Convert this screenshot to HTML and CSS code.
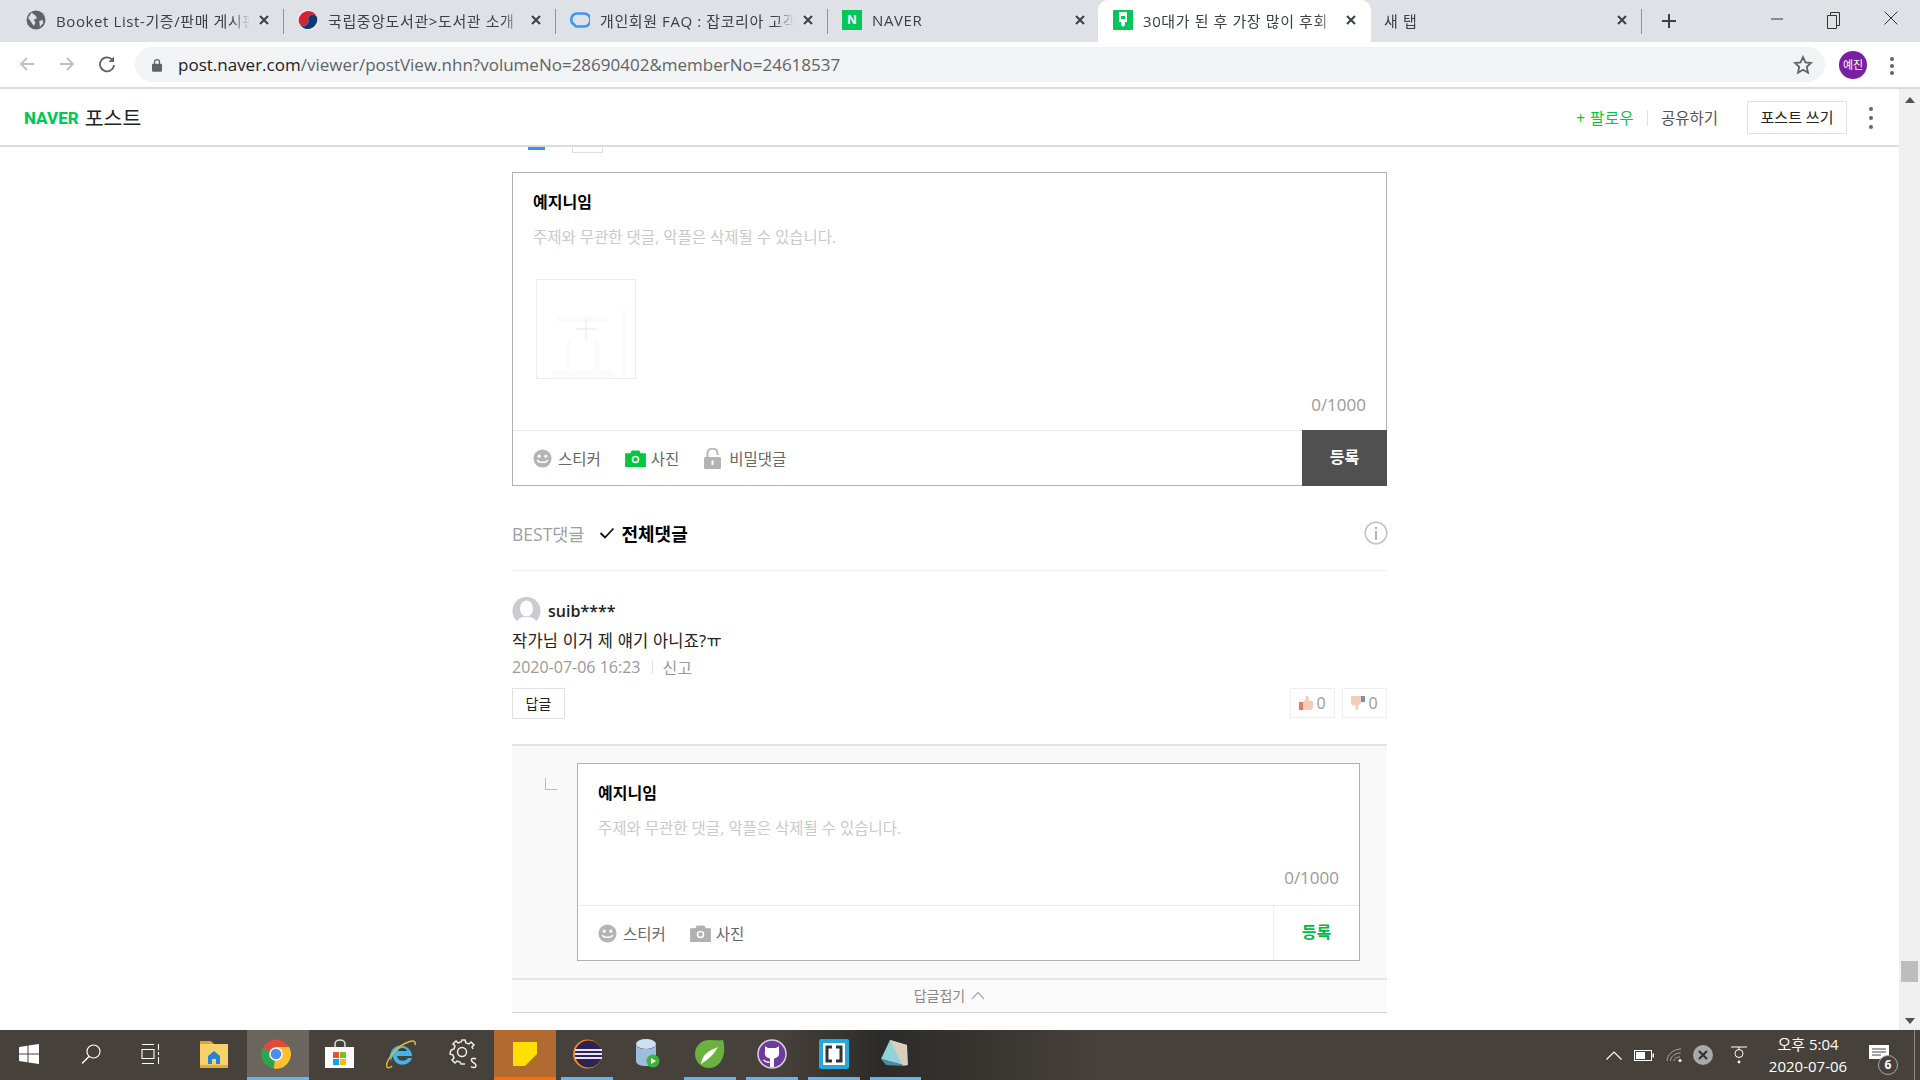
FILE: index.html
```html
<!DOCTYPE html>
<html lang="ko">
<head>
    <meta charset="UTF-8">
    <title>30대가 된 후 가장 많이 후회</title>
    <link rel="stylesheet" href="styles.css">
</head>
<body>
    <svg class="sprites" width="0" height="0">
        <symbol id="ico-smile" viewBox="0 0 20 20">
            <circle cx="10" cy="10" r="9.5" fill="#b4b4b4"/>
            <circle cx="6.5" cy="7.5" r="1.6" fill="#fff"/>
            <circle cx="13.5" cy="7.5" r="1.6" fill="#fff"/>
            <path d="M4.5 11.5c1.2 3.4 9.8 3.4 11 0" fill="none" stroke="#fff" stroke-width="1.6"/>
        </symbol>
        <symbol id="ico-camera" viewBox="0 0 22 18">
            <path d="M0 3.5h5.5l1.5-3h8l1.500 3H22V18H0z" fill="currentColor"/>
            <circle cx="11" cy="10" r="4" fill="#fff"/>
            <circle cx="11" cy="10" r="2.300" fill="currentColor"/>
        </symbol>
        <symbol id="ico-x" viewBox="0 0 12 12">
            <path d="M2 2l8 8M10 2l-8 8" stroke="#3c4043" stroke-width="2" fill="none"/>
        </symbol>
    </svg>

    <div class="tabstrip">
        <div class="tab">
            <svg class="favicon" viewBox="0 0 18 18"><circle cx="9" cy="9" r="8.500" fill="#5f6368"/><path d="M5 2.500l3 2 2 3-3 1 1.500 3-1.500 3L4 10 2 7zM12 10l3-1 .5 3-3 3z" fill="#dee1e6"/></svg>
            <span class="tab-title">Booket List-기증/판매 게시판</span>
            <svg class="tab-close"><use href="#ico-x"/></svg>
        </div>
        <div class="tab">
            <svg class="favicon" viewBox="0 0 20 20"><circle cx="10" cy="10" r="10" fill="#fff"/><path d="M1 13A9.500 9.500 0 0 1 19 7 5 5 0 0 0 10 8.500 5 5 0 0 1 1 13z" fill="#d5232f"/><path d="M1 13a5 5 0 0 0 9-4.500 5 5 0 0 1 9-1.500A9.500 9.500 0 0 1 1 13z" fill="#0e3a78"/></svg>
            <span class="tab-title">국립중앙도서관&gt;도서관 소개</span>
            <svg class="tab-close"><use href="#ico-x"/></svg>
        </div>
        <div class="tab">
            <svg class="favicon" viewBox="0 0 20 20"><path d="M6 16.500h8a6.500 6.500 0 0 0 0-13H7a6 6 0 0 0-3 11z" fill="none" stroke="#3b96f5" stroke-width="2.600"/></svg>
            <span class="tab-title">개인회원 FAQ : 잡코리아 고객</span>
            <svg class="tab-close"><use href="#ico-x"/></svg>
        </div>
        <div class="tab tab-last-before-active">
            <span class="favicon favicon-naver">N</span>
            <span class="tab-title">NAVER</span>
            <svg class="tab-close"><use href="#ico-x"/></svg>
        </div>
        <div class="tab tab-active">
            <svg class="favicon" viewBox="0 0 20 20"><rect width="20" height="20" rx="1" fill="#03c75a"/><path d="M6 2h8v10h-2v3l-2 2-2-2v-3H6z" fill="#fff"/><rect x="8" y="6" width="4" height="3" fill="#03c75a"/></svg>
            <span class="tab-title">30대가 된 후 가장 많이 후회</span>
            <svg class="tab-close"><use href="#ico-x"/></svg>
        </div>
        <div class="tab">
            <span class="tab-title tab-title-new">새 탭</span>
            <svg class="tab-close"><use href="#ico-x"/></svg>
        </div>
        <svg class="new-tab" viewBox="0 0 16 16"><path d="M8 1v14M1 8h14" stroke="#3c4043" stroke-width="2" fill="none"/></svg>
        <div class="win-buttons">
            <svg class="win-min" viewBox="0 0 14 14"><path d="M1 7h12" stroke="#333" stroke-width="1"/></svg>
            <svg class="win-restore" viewBox="0 0 14 18"><path d="M.5 4.500h9v13h-9zM3.500 4.500v-3h9v13h-3" fill="none" stroke="#333"/></svg>
            <svg class="win-close" viewBox="0 0 14 14"><path d="M.5.5l13 13M13.500.5l-13 13" stroke="#333" fill="none"/></svg>
        </div>
    </div>

    <div class="toolbar">
        <svg class="nav-icon" viewBox="0 0 18 18"><path d="M16 9H3M9 3L3 9l6 6" fill="none" stroke="#bdc1c6" stroke-width="1.800"/></svg>
        <svg class="nav-icon" viewBox="0 0 18 18"><path d="M2 9h13M9 3l6 6-6 6" fill="none" stroke="#bdc1c6" stroke-width="1.800"/></svg>
        <svg class="nav-icon" viewBox="0 0 18 18"><path d="M14.500 5A7 7 0 1 0 16 10" fill="none" stroke="#5f6368" stroke-width="1.800"/><path d="M16 1.500V7h-5.500z" fill="#5f6368"/></svg>
        <div class="omnibox">
            <svg class="lock-icon" viewBox="0 0 12 16"><path d="M3 7V4.500a3 3 0 0 1 6 0V7" fill="none" stroke="#5f6368" stroke-width="1.500"/><rect y="6.500" width="12" height="9.500" rx="1" fill="#5f6368"/></svg>
            <span class="url"><b>post.naver.com</b>/viewer/postView.nhn?volumeNo=28690402&amp;memberNo=24618537</span>
            <svg class="star-icon" viewBox="0 0 20 20"><path d="M10 2l2.400 5.400 5.600.6-4.200 3.900 1.200 5.800-5-3-5 3 1.200-5.800L2 8l5.600-.6z" fill="none" stroke="#5f6368" stroke-width="1.800"/></svg>
        </div>
        <div class="profile">예진</div>
        <div class="kebab kebab-chrome"><i></i><i></i><i></i></div>
    </div>

    <div class="viewport">
        <div class="page">
            <header class="post-header">
                <div class="brand"><span class="brand-naver">NAVER</span> <span class="brand-post">포스트</span></div>
                <div class="header-actions">
                    <span class="follow">+ 팔로우</span>
                    <span class="header-sep"></span>
                    <span class="share">공유하기</span>
                    <span class="write-btn">포스트 쓰기</span>
                    <div class="kebab kebab-post"><i></i><i></i><i></i></div>
                </div>
            </header>

            <div class="content">
                <div class="stub">
                    <span class="stub-blue"></span>
                    <span class="stub-box"></span>
                </div>

                <div class="editor">
                    <div class="editor-body">
                        <div class="editor-name">예지니임</div>
                        <div class="editor-placeholder">주제와 무관한 댓글, 악플은 삭제될 수 있습니다.</div>
                        <div class="photo-slot">
                            <svg class="photo-plus" viewBox="0 0 98 98">
                                <path d="M20 36h52v6H20zM30 60h4v45h-4zM58 60h4v45h-4zM14 90h62v8H14zM84 30h6v68h-6z" fill="#fbfbfb"/>
                                <path d="M49 39v20M39 49h20" stroke="#e6e6e6" fill="none"/>
                            </svg>
                        </div>
                        <div class="editor-count">0/1000</div>
                    </div>
                    <div class="editor-foot">
                        <div class="editor-tools">
                            <span class="tool"><svg class="tool-smile"><use href="#ico-smile"/></svg>스티커</span>
                            <span class="tool"><svg class="tool-camera green"><use href="#ico-camera"/></svg>사진</span>
                            <span class="tool tool-lock-wrap"><svg class="tool-lock" viewBox="0 0 17 21"><path d="M3.500 10V5.500a5 5 0 0 1 10 0V7" fill="none" stroke="#b4b4b4" stroke-width="2"/><rect y="9" width="17" height="12" rx="1.500" fill="#b4b4b4"/><rect x="7.500" y="12.500" width="2" height="4.500" fill="#fff"/></svg>비밀댓글</span>
                        </div>
                        <div class="submit-dark">등록</div>
                    </div>
                </div>

                <div class="sort-row">
                    <span class="sort-best">BEST댓글</span>
                    <svg class="sort-check" viewBox="0 0 16 12"><path d="M1.500 6l4.500 4.500 8.500-9" fill="none" stroke="#111" stroke-width="1.800"/></svg>
                    <span class="sort-all">전체댓글</span>
                    <svg class="info-icon" viewBox="0 0 24 24"><circle cx="12" cy="12" r="10.800" fill="none" stroke="#c4c4c4" stroke-width="1.500"/><circle cx="12" cy="7" r="1.300" fill="#b5b5b5"/><path d="M12 10v9" stroke="#b5b5b5" stroke-width="2"/></svg>
                </div>

                <div class="comment">
                    <div class="comment-user">
                        <svg class="avatar" viewBox="0 0 28 28"><circle cx="14" cy="14" r="14" fill="#c9ccd0"/><ellipse cx="14" cy="11.500" rx="6.500" ry="8" fill="#fff"/><path d="M4 25c3-5 6-5 10-5s7 0 10 5a14 14 0 0 1-20 0z" fill="#fff"/></svg>
                        <span class="user-id">suib****</span>
                    </div>
                    <p class="comment-text">작가님 이거 제 얘기 아니죠?ㅠ</p>
                    <div class="comment-meta"><span>2020-07-06 16:23</span><span class="meta-sep"></span><span>신고</span></div>
                    <div class="comment-actions">
                        <span class="reply-btn">답글</span>
                        <div class="votes">
                            <span class="vote"><svg class="thumb" viewBox="0 0 14 14"><rect y="6" width="4" height="8" fill="#dc7f66"/><path d="M4 6l3-3V0h2l1 4v1h4v7l-2 2H4z" fill="#f4cdb9"/></svg>0</span>
                            <span class="vote"><svg class="thumb" viewBox="0 0 14 14"><rect x="10" width="4" height="6" fill="#7d93ad"/><path d="M0 0h10v7l-3 3v4H5L4 9H1L0 7z" fill="#f4cdb9"/></svg>0</span>
                        </div>
                    </div>
                </div>

                <div class="replies">
                    <span class="reply-mark"></span>
                    <div class="editor editor-reply">
                        <div class="editor-body">
                            <div class="editor-name">예지니임</div>
                            <div class="editor-placeholder">주제와 무관한 댓글, 악플은 삭제될 수 있습니다.</div>
                            <div class="editor-count">0/1000</div>
                        </div>
                        <div class="editor-foot">
                            <div class="editor-tools">
                                <span class="tool"><svg class="tool-smile"><use href="#ico-smile"/></svg>스티커</span>
                                <span class="tool"><svg class="tool-camera gray"><use href="#ico-camera"/></svg>사진</span>
                            </div>
                            <div class="submit-green">등록</div>
                        </div>
                    </div>
                </div>
                <div class="fold">답글접기 <svg class="fold-arrow" viewBox="0 0 14 9"><path d="M1 8l6-6.500L13 8" fill="none" stroke="#aaa" stroke-width="1.200"/></svg></div>
            </div>
        </div>
        <div class="scrollbar">
            <span class="arrow-up"></span>
            <span class="scroll-thumb"></span>
            <span class="arrow-down"></span>
        </div>
    </div>

    <footer class="taskbar">
        <div class="task-apps">
            <div class="slot slot-shift"><svg class="ti-win" viewBox="0 0 20 20"><path d="M0 3l8.500-1.200v7.700H0zM9.500 1.600L20 0v9.500H9.500zM0 10.500h8.500v7.700L0 17zM9.500 10.500H20V20l-10.500-1.600z" fill="#fff"/></svg></div>
            <div class="slot slot-shift"><svg class="ti-search" viewBox="0 0 20 20"><circle cx="12.500" cy="7.500" r="6.500" fill="none" stroke="#fff" stroke-width="1.200"/><path d="M8 12.500L1 19.500" stroke="#fff" stroke-width="1.400"/></svg></div>
            <div class="slot slot-shift-more"><svg class="ti-view" viewBox="0 0 20 20"><path d="M1 .5h12M1 19.500h12M1 5.500h12v9H1zM17.500 0v6M17.500 8v3M17.500 13v7" fill="none" stroke="#fff" stroke-width="1.100"/></svg></div>
            <div class="slot slot-shift"><svg class="ti-folder" viewBox="0 0 28 28"><path d="M0 1h11l3 3H0z" fill="#e2a427"/><rect y="4" width="28" height="24" fill="#f7d26a"/><rect y="25" width="28" height="3" fill="#e0ae3a"/><path d="M8 24v-8l6-5 6 5v8h-4v-5h-4v5z" fill="#2a82d4"/></svg></div>
            <div class="slot slot-on"><svg class="ti-app" viewBox="0 0 30 30"><circle cx="15" cy="15" r="14.500" fill="#e2483b"/><path d="M15 15L1.600 9A14.500 14.500 0 0 0 13 29.400z" fill="#2ea44f"/><path d="M15 8h13a14.500 14.500 0 0 1-15 21.400z" fill="#fbc02d"/><circle cx="15" cy="15" r="6.800" fill="#fff"/><circle cx="15" cy="15" r="5.300" fill="#4b8df3"/></svg></div>
            <div class="slot"><svg class="ti-store" viewBox="0 0 30 30"><path d="M10 8V5a5 4 0 0 1 10 0v3" fill="none" stroke="#ddd" stroke-width="1.500"/><rect y="8" width="29" height="21" fill="#fff"/><rect x="8" y="13" width="6" height="6" fill="#e8532b"/><rect x="15" y="13" width="6" height="6" fill="#7fba2c"/><rect x="8" y="20" width="6" height="6" fill="#05a6f0"/><rect x="15" y="20" width="6" height="6" fill="#f9ba0a"/></svg></div>
            <div class="slot"><svg class="ti-app" viewBox="0 0 30 30"><path d="M5 22a11 11 0 1 1 21-5H11c1 6 9 6 11 2h4c-3 9-17 9-19-1-.5-1 0-2-2 4z" fill="#3fb7ea"/><path d="M12 12h9c-1-4-8-4-9 0z" fill="#3d3a35"/><path d="M1 28C-1 24 8 9 20 4c6-3 10-3 9 2M1 28c1 1 3 1 5-1" fill="none" stroke="#e9b92d" stroke-width="1.500"/></svg></div>
            <div class="slot"><svg class="ti-app" viewBox="0 0 30 30"><circle cx="14" cy="13" r="4.500" fill="none" stroke="#eee" stroke-width="1.500"/><path d="M3 11l3-1 1-3-2-2 3-3 2 2 3-1 1-2h3l1 3 3 1 2-2 3 3-2 2 1 2M3 11l-1 4 3 1 1 3-2 2 3 3 2-2 3 1 1 2h4" fill="none" stroke="#eee" stroke-width="1.500"/><path d="M28 20c-2-1-5-1-4.500 1.500S28 24 28 26.500s-3 2.500-5 1" fill="none" stroke="#eee" stroke-width="1.500"/></svg></div>
            <div class="slot slot-sticky"><svg class="ti-sticky" viewBox="0 0 24 24"><rect width="24" height="24" fill="#ffe000"/><path d="M24 12L12 24h12z" fill="#a8712a"/></svg></div>
            <div class="slot slot-run-small"><svg class="ti-app" viewBox="0 0 30 30"><circle cx="15.500" cy="15" r="14.500" fill="#f08c1a"/><circle cx="16.500" cy="15" r="13.500" fill="#2c2255"/><path d="M3 11h27M3 15h27M3 19h27" stroke="#e8e4f5" stroke-width="2"/></svg></div>
            <div class="slot"><svg class="ti-db" viewBox="0 0 24 30"><ellipse cx="10" cy="5" rx="10" ry="5" fill="#cfe0f2"/><path d="M0 5v17c0 3 4 5 10 5s10-2 10-5V5c0 3-4 5-10 5S0 8 0 5z" fill="#9dbcde"/><circle cx="17" cy="22" r="6.500" fill="#3fb23c"/><path d="M15 19l5 3-5 3z" fill="#fff"/></svg></div>
            <div class="slot"><svg class="ti-app" viewBox="0 0 30 30"><path d="M28 1c4 14-2 28-14 28A14 14 0 0 1 14 1c6 0 11 1 14 0z" fill="#6ab23d"/><path d="M6 25C8 14 14 12 23 8 19 15 14 20 6 25zM6 25l3 2" fill="#fff"/></svg></div>
            <div class="slot"><svg class="ti-app" viewBox="0 0 30 30"><circle cx="15" cy="15" r="14" fill="#6f3a9c" stroke="#d9d2df" stroke-width="1.500"/><path d="M8 7l3 2h8l3-2v5c1 5-2 7-5 7.500V28h-4v-8.500C10 19 7 17 8 12z" fill="#fff"/><path d="M12.500 23c-3 1-4-1-6-2" fill="none" stroke="#fff" stroke-width="1.500"/></svg></div>
            <div class="slot"><svg class="ti-app" viewBox="0 0 30 30"><rect width="30" height="30" rx="2" fill="#25a7e0"/><rect x="4" y="4" width="22" height="22" fill="#fff"/><path d="M13 8H8v14h5M17 8h5v14h-5" fill="none" stroke="#333" stroke-width="3"/></svg></div>
            <div class="slot"><svg class="ti-app" viewBox="0 0 30 30"><path d="M10 1l17 5-4 20L1 20z" fill="#8fd3d9"/><path d="M10 1l17 5 1 20-5 1z" fill="#d8d0bc"/><path d="M1 20l22 6 3 1-20-1z" fill="#4a8f9c"/></svg></div>
        </div>
        <div class="tray">
            <svg class="tray-chev" viewBox="0 0 16 9"><path d="M.5 8.500L8 1l7.500 7.500" fill="none" stroke="#fff" stroke-width="1.200"/></svg>
            <svg class="tray-batt" viewBox="0 0 20 11"><rect x=".5" y=".5" width="17" height="10" fill="none" stroke="#fff"/><rect x="2" y="2" width="9" height="7" fill="#fff"/><rect x="18.500" y="3.500" width="1.500" height="4" fill="#fff"/></svg>
            <svg class="tray-wifi" viewBox="0 0 16 14"><path d="M1 13C1 7 7 1 15 1M4.500 13c0-4 4-8 10-8M8 13c0-2 2-4 6-4" fill="none" stroke="#aaa" stroke-width="1"/><circle cx="14" cy="12.500" r="1.500" fill="#fff"/></svg>
            <svg class="tray-x" viewBox="0 0 20 20"><circle cx="10" cy="10" r="10" fill="#a9a9a9"/><path d="M6 6l8 8M14 6l-8 8" stroke="#333" stroke-width="2.200"/></svg>
            <svg class="tray-bulb" viewBox="0 0 16 18"><path d="M0 1h16" stroke="#fff"/><circle cx="8" cy="7.500" r="4" fill="none" stroke="#fff"/><path d="M8 3.500V1" stroke="#fff"/><circle cx="8" cy="16" r="1.400" fill="#fff"/></svg>
            <div class="clock"><div>오후 5:04</div><div>2020-07-06</div></div>
            <div class="notify">
                <svg class="notify-icon" viewBox="0 0 20 18"><path d="M0 0h20v14H0z" fill="#fff"/><path d="M3 4h14M3 7h14M3 10h9" stroke="#444" stroke-width="1"/></svg>
                <span class="notify-badge">6</span>
            </div>
            <span class="show-desktop"></span>
        </div>
    </footer>
</body>
</html>
```

FILE: styles.css
```css
* {
    box-sizing: border-box;
}

html, body {
    margin: 0;
    padding: 0;
}

body {
    width: 1920px;
    height: 1080px;
    overflow: hidden;
    display: flex;
    flex-direction: column;
    background-color: #fff;
    color: #333;
    font-family: "Open Sans", "Noto Sans CJK KR", sans-serif;
    font-size: 15px;
}

.sprites {
    position: absolute;
}

/* chrome tabs */
.tabstrip {
    height: 42px;
    flex: none;
    display: flex;
    align-items: stretch;
    padding-left: 12px;
    background-color: #dee1e6;
    font-size: 15px;
    letter-spacing: .6px;
    color: #3c4043;
}

.tab {
    width: 272px;
    display: flex;
    align-items: center;
    padding: 0 14px 2px 14px;
    position: relative;
}

.tab::after {
    content: "";
    position: absolute;
    right: 0;
    top: 9px;
    height: 25px;
    width: 1px;
    background-color: #8f9296;
}

.tab-last-before-active::after {
    background-color: transparent;
}

.tab-active {
    background-color: #fff;
    border-radius: 10px 10px 0 0;
    margin-left: -2px;
    margin-right: -1px;
    padding-left: 15px;
    width: 273px;
}

.tab-active::after {
    display: none;
}

.favicon {
    width: 20px;
    height: 20px;
    flex: none;
    margin-right: 10px;
}

.favicon-naver {
    background-color: #03c75a;
    color: #fff;
    font: bold 13px/20px "Liberation Sans", sans-serif;
    letter-spacing: 0;
    text-align: center;
}

.tab-title {
    flex: 1;
    min-width: 0;
    white-space: nowrap;
    overflow: hidden;
    -webkit-mask-image: linear-gradient(to right, #000 90%, transparent);
    mask-image: linear-gradient(to right, #000 90%, transparent);
}

.tab-close {
    width: 12px;
    height: 12px;
    flex: none;
    margin-left: 8px;
}

.new-tab {
    width: 16px;
    height: 16px;
    margin: 13px 0 0 19px;
}

.win-buttons {
    margin-left: auto;
    display: flex;
    align-items: flex-start;
}

.win-min {
    width: 14px;
    height: 14px;
    margin: 12px 43px 0 0;
}

.win-restore {
    width: 14px;
    height: 18px;
    margin: 11px 43px 0 0;
}

.win-close {
    width: 14px;
    height: 14px;
    margin: 11px 22px 0 0;
}

/* chrome toolbar */
.toolbar {
    height: 47px;
    flex: none;
    display: flex;
    align-items: flex-start;
    padding: 5px 19px 0 18px;
    background-color: #fff;
    border-bottom: 2px solid #dadada;
}

.nav-icon {
    width: 18px;
    height: 18px;
    margin: 8px 22px 0 0;
}

.nav-icon:nth-child(3) {
    margin-right: 19px;
}

.omnibox {
    width: 1690px;
    height: 35px;
    flex: none;
    display: flex;
    align-items: center;
    padding: 0 12px 0 17px;
    background-color: #f1f3f4;
    border-radius: 18px;
}

.lock-icon {
    width: 10px;
    height: 14px;
    margin-right: 16px;
}

.url {
    font-size: 17px;
    color: #5f6368;
    white-space: nowrap;
}

.url b {
    font-weight: 400;
    color: #202124;
}

.star-icon {
    width: 20px;
    height: 20px;
    margin-left: auto;
}

.profile {
    width: 28px;
    height: 28px;
    margin: 4px 0 0 14px;
    border-radius: 50%;
    background-color: #7b1fa2;
    color: #fff;
    font-size: 11px;
    line-height: 28px;
    text-align: center;
}

.kebab {
    display: flex;
    flex-direction: column;
    align-items: center;
}

.kebab i {
    display: block;
    border-radius: 50%;
}

.kebab-chrome {
    gap: 3px;
    margin: 10px 0 0 23px;
}

.kebab-chrome i {
    width: 4px;
    height: 4px;
    background-color: #5f6368;
}

/* page */
.viewport {
    flex: 1;
    min-height: 0;
    display: flex;
}

.page {
    flex: 1;
    min-width: 0;
    background-color: #fff;
}

.post-header {
    height: 58px;
    display: flex;
    align-items: center;
    justify-content: space-between;
    padding: 1px 26px 0 24px;
    border-bottom: 2px solid #dcdcdc;
}

.brand {
    display: flex;
    align-items: center;
    gap: 6px;
}

.brand-naver {
    color: #03c75a;
    font: 800 17px/20px "Roboto", sans-serif;
}

.brand-post {
    color: #222;
    font-size: 20.500px;
    line-height: 24px;
}

.header-actions {
    display: flex;
    align-items: center;
}

.follow {
    color: #00c73c;
    font-size: 15.500px;
    letter-spacing: .4px;
}

.header-sep {
    width: 1px;
    height: 16px;
    margin: 0 13px 0 13px;
    background-color: #e2e2e2;
}

.share {
    color: #555;
    font-size: 15.500px;
}

.write-btn {
    width: 100px;
    height: 33px;
    margin-left: 29px;
    border: 1px solid #e2e2e2;
    color: #222;
    font-size: 15px;
    line-height: 30px;
    text-align: center;
}

.kebab-post {
    gap: 5px;
    margin-left: 22px;
}

.kebab-post i {
    width: 4px;
    height: 4px;
    background-color: #666;
}

.content {
    width: 875px;
    margin-left: 512px;
}

.stub {
    height: 5px;
    display: flex;
    align-items: flex-start;
}

.stub-blue {
    width: 17px;
    height: 3px;
    margin-left: 16px;
    background-color: #3a8df2;
}

.stub-box {
    width: 31px;
    height: 6px;
    margin-left: 27px;
    border: 1px solid #ddd;
    border-top: none;
}

/* comment editor */
.editor {
    margin-top: 20px;
    border: 1px solid #b0b0b0;
    background-color: #fff;
}

.editor-body {
    padding: 18px 20px 15px 20px;
    height: 257px;
}

.editor-name {
    height: 22px;
    color: #000;
    font-size: 16px;
    font-weight: 700;
    line-height: 22px;
}

.editor-placeholder {
    height: 22px;
    margin-top: 13px;
    color: #c9c9c9;
    font-size: 15.500px;
    line-height: 22px;
}

.photo-slot {
    width: 100px;
    height: 100px;
    margin: 31px 0 0 3px;
    border: 1px solid #ececec;
    overflow: hidden;
}

.photo-plus {
    display: block;
    width: 98px;
    height: 98px;
}

.editor-count {
    height: 20px;
    margin-top: 16px;
    color: #999;
    font-size: 17px;
    line-height: 20px;
    text-align: right;
}

.editor-foot {
    height: 55px;
    display: flex;
    border-top: 1px solid #eaeaea;
}

.editor-tools {
    flex: 1;
    display: flex;
    align-items: center;
    gap: 24px;
    padding: 0 0 0 20px;
}

.tool {
    display: flex;
    align-items: center;
    color: #666;
    font-size: 15.500px;
}

.tool-smile {
    width: 19px;
    height: 19px;
    margin-right: 6px;
}

.tool-camera {
    width: 21px;
    height: 17px;
    margin-right: 5px;
}

.green {
    color: #00c73c;
}

.gray {
    color: #b0b0b0;
}

.tool-lock-wrap {
    margin-left: 1px;
}

.tool-lock {
    width: 17px;
    height: 21px;
    margin-right: 8px;
}

.submit-dark {
    width: 85px;
    margin: -1px -1px -1px 0;
    background-color: #505050;
    color: #fff;
    font-size: 16px;
    font-weight: 700;
    line-height: 55px;
    text-align: center;
}

/* sort tabs */
.sort-row {
    height: 50px;
    margin-top: 35px;
    padding-bottom: 25px;
    display: flex;
    align-items: center;
    border-bottom: 1px solid #eee;
}

.sort-best {
    color: #a0a0a0;
    font-size: 17.500px;
}

.sort-check {
    width: 16px;
    height: 12px;
    margin: 0 6px 0 15px;
}

.sort-all {
    color: #000;
    font-size: 18px;
    font-weight: 700;
}

.info-icon {
    width: 24px;
    height: 24px;
    margin-left: auto;
    margin-right: -1px;
}

/* comment */
.comment {
    padding: 26px 0 25px 0;
}

.comment-user {
    height: 28px;
    display: flex;
    align-items: center;
    gap: 7px;
}

.avatar {
    width: 29px;
    height: 28px;
}

.user-id {
    color: #222;
    font-size: 16px;
    font-weight: 600;
}

.comment-text {
    height: 22px;
    margin: 5px 0 0 0;
    color: #222;
    font-size: 16.500px;
    letter-spacing: .2px;
    line-height: 22px;
}

.comment-meta {
    height: 20px;
    margin-top: 5px;
    display: flex;
    align-items: center;
    color: #999;
    font-size: 16px;
}

.meta-sep {
    width: 1px;
    height: 14px;
    margin: 0 9px 0 12px;
    background-color: #e2e2e2;
}

.comment-actions {
    margin-top: 11px;
    display: flex;
    justify-content: space-between;
}

.reply-btn {
    width: 53px;
    height: 31px;
    border: 1px solid #e2e2e2;
    color: #222;
    font-size: 14px;
    line-height: 29px;
    text-align: center;
}

.votes {
    display: flex;
    gap: 7px;
}

.vote {
    width: 45px;
    height: 30px;
    display: flex;
    align-items: center;
    justify-content: center;
    gap: 3px;
    border: 1px solid #eee;
    color: #999;
    font-size: 16px;
}

.thumb {
    width: 14px;
    height: 14px;
}

/* reply form */
.replies {
    display: flex;
    align-items: flex-start;
    padding: 17px 27px 17px 33px;
    background-color: #f9f9f9;
    border-top: 2px solid #e4e4e4;
}

.reply-mark {
    width: 12px;
    height: 12px;
    margin: 15px 20px 0 0;
    flex: none;
    border-left: 1px solid #bbb;
    border-bottom: 1px solid #bbb;
}

.editor-reply {
    width: 783px;
    margin-top: 0;
}

.editor-reply .editor-body {
    height: 141px;
}

.editor-reply .editor-count {
    margin-top: 29px;
}

.submit-green {
    width: 86px;
    border-left: 1px solid #eee;
    color: #00b843;
    font-size: 16px;
    font-weight: 700;
    line-height: 53px;
    text-align: center;
}

.fold {
    height: 35px;
    display: flex;
    align-items: center;
    justify-content: center;
    gap: 6px;
    padding-bottom: 2px;
    background-color: #fafafa;
    border-top: 2px solid #e4e4e4;
    border-bottom: 1px solid #d5d5d5;
    color: #888;
    font-size: 14px;
}

.fold-arrow {
    width: 14px;
    height: 9px;
}

/* scrollbar */
.scrollbar {
    width: 21px;
    flex: none;
    display: flex;
    flex-direction: column;
    align-items: center;
    background-color: #f0f0f0;
}

.arrow-up {
    margin-top: 8px;
    border: 5px solid transparent;
    border-top: none;
    border-bottom: 6px solid #505050;
}

.arrow-down {
    margin: 36px 0 6px 0;
    border: 5px solid transparent;
    border-bottom: none;
    border-top: 6px solid #505050;
}

.scroll-thumb {
    width: 17px;
    height: 21px;
    margin-top: auto;
    background-color: #bdbdbd;
}

/* windows taskbar */
.taskbar {
    height: 50px;
    flex: none;
    display: flex;
    background: linear-gradient(to right, #46413b 0, #46413b 780px, #2d2b29 880px, #35322e 960px, #46413b 1100px);
    color: #fff;
}

.task-apps {
    display: grid;
    grid-template-columns: repeat(15, 61.750px);
}

.slot {
    display: flex;
    align-items: center;
    justify-content: center;
    height: 50px;
    padding-bottom: 3px;
    position: relative;
}

.slot-shift {
    padding-right: 4px;
}

.slot-shift-more {
    padding-right: 7px;
}

.slot-on {
    padding-right: 3px;
    background-color: #6a665e;
    box-shadow: inset 0 -3px 0 #6cb2e8;
}

.slot-sticky {
    background-color: #b26a30;
    box-shadow: inset 0 -3px 0 #f76d0c;
}

.slot-run-small::after,
.slot:nth-child(11) ~ .slot::after {
    content: "";
    position: absolute;
    left: 5px;
    right: 5px;
    bottom: 0;
    height: 3px;
    background-color: #6cb2e8;
}

.ti-win, .ti-search, .ti-view {
    width: 20px;
    height: 20px;
}

.ti-folder {
    width: 28px;
    height: 28px;
}

.ti-app, .ti-store {
    width: 30px;
    height: 30px;
}

.ti-sticky {
    width: 24px;
    height: 24px;
}

.ti-db {
    width: 24px;
    height: 30px;
}

.tray {
    margin-left: auto;
    display: flex;
    align-items: center;
}

.tray-chev {
    width: 16px;
    height: 9px;
    margin-right: 12px;
}

.tray-batt {
    width: 20px;
    height: 11px;
    margin-right: 12px;
}

.tray-wifi {
    width: 16px;
    height: 14px;
    margin-right: 11px;
}

.tray-x {
    width: 20px;
    height: 20px;
    margin-right: 18px;
}

.tray-bulb {
    width: 16px;
    height: 18px;
    margin-right: 16px;
}

.clock {
    width: 90px;
    font-size: 15px;
    line-height: 22px;
    text-align: center;
}

.notify {
    width: 60px;
    height: 50px;
    position: relative;
    margin-right: 1px;
}

.notify-icon {
    position: absolute;
    left: 16px;
    top: 15px;
    width: 20px;
    height: 18px;
}

.notify-badge {
    position: absolute;
    left: 25px;
    top: 25px;
    width: 20px;
    height: 20px;
    border: 1px solid #aaa;
    border-radius: 50%;
    background-color: #46413b;
    color: #fff;
    font-size: 12px;
    font-weight: 700;
    line-height: 18px;
    text-align: center;
}

.show-desktop {
    width: 6px;
    height: 50px;
    border-left: 1px solid #8a8680;
}
```
